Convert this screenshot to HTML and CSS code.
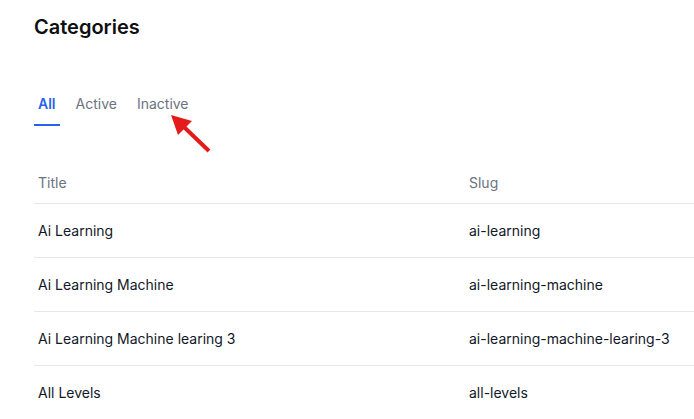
FILE: index.html
```html
<!DOCTYPE html>
<html lang="en">
<head>
<meta charset="utf-8">
<title>Categories</title>
<link rel="stylesheet" href="styles.css">
</head>
<body>
<main class="page">
  <h1 class="page-title">Categories</h1>
  <nav class="tabs">
    <a class="tab tab-active">All</a>
    <a class="tab">Active</a>
    <a class="tab tab-inactive">Inactive
      <svg class="pointer" width="44" height="44" viewBox="0 0 44 44" aria-hidden="true">
        <line x1="14" y1="14" x2="39" y2="38" stroke="#e31b1b" stroke-width="4" stroke-linecap="butt"/>
        <polygon points="1,2 22,8 8,22" fill="#e31b1b"/>
      </svg>
    </a>
  </nav>
  <table class="table">
    <thead>
      <tr><th class="col-title">Title</th><th>Slug</th></tr>
    </thead>
    <tbody>
      <tr><td>Ai Learning</td><td>ai-learning</td></tr>
      <tr><td>Ai Learning Machine</td><td>ai-learning-machine</td></tr>
      <tr><td>Ai Learning Machine learing 3</td><td>ai-learning-machine-learing-3</td></tr>
      <tr><td>All Levels</td><td>all-levels</td></tr>
    </tbody>
  </table>
</main>
</body>
</html>
```

FILE: styles.css
```css
* { box-sizing: border-box; }
html, body { margin: 0; padding: 0; background: #fff; }
body {
  font-family: Inter, "Noto Sans", sans-serif;
  color: #111827;
  overflow: hidden;
}
.page {
  padding: 13px 0 0 34px;
}
.page-title {
  margin: 0;
  font-size: 20px;
  line-height: 28px;
  font-weight: 600;
  color: #0f0f10;
}
.tabs {
  display: flex;
  gap: 12px;
  margin-top: 53px;
}
.tab {
  position: relative;
  display: block;
  padding: 0 4px 10px;
  font-size: 14px;
  line-height: 20px;
  color: #6b7280;
  border-bottom: 2px solid transparent;
}
.tab-active {
  color: #2563eb;
  font-weight: 600;
  border-bottom-color: #2563eb;
}
.pointer {
  position: absolute;
  left: 37px;
  top: 19px;
}
.table {
  margin-top: 37px;
  width: 100%;
  border-collapse: collapse;
  font-size: 14px;
  line-height: 20px;
}
.table th {
  text-align: left;
  font-weight: 400;
  color: #6b7280;
  padding: 10px 4px;
  border-bottom: 1px solid #e5e7eb;
}
.table th.col-title { width: 431px; }
.table td {
  padding: 17px 4px 16px;
  color: #111827;
  border-bottom: 1px solid #e5e7eb;
  white-space: nowrap;
}
```
